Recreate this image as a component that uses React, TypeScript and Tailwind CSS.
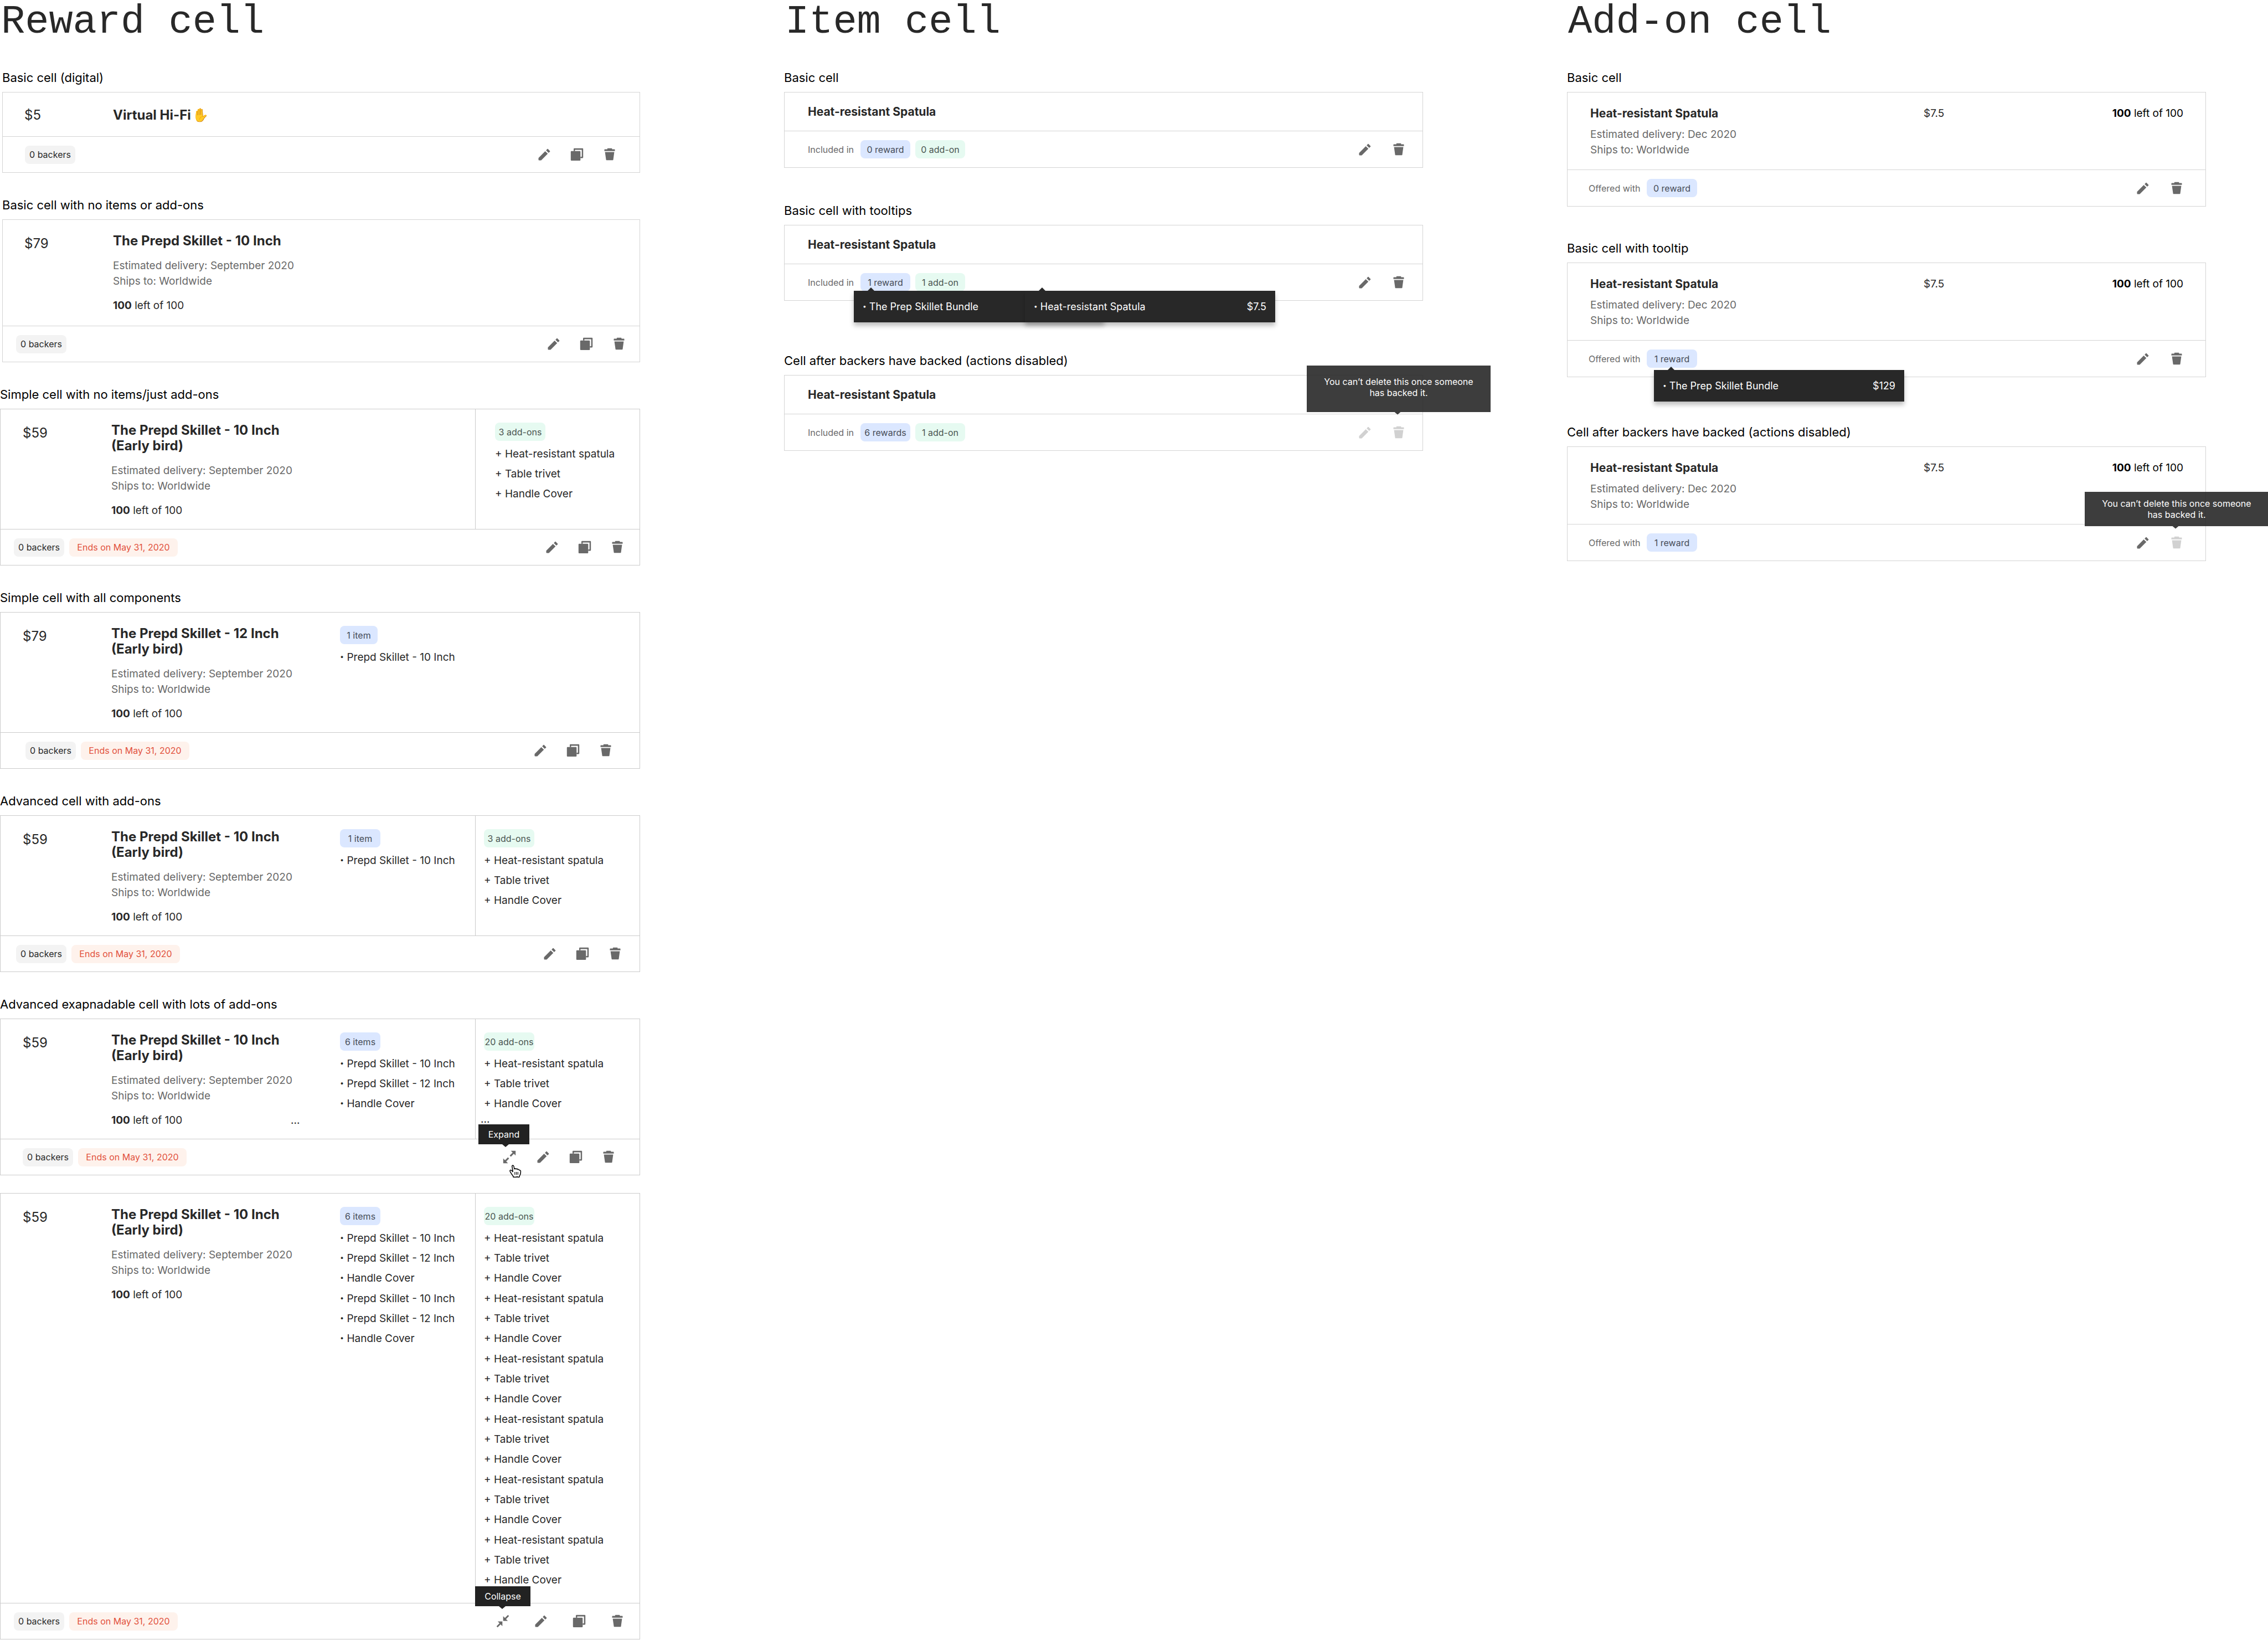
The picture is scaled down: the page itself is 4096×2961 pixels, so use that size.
import type { ReactNode } from "react";
import clsx from "clsx";

type IconProps = { className?: string };

function PencilIcon({ className }: IconProps) {
  return (
    <svg viewBox="0 0 24 24" fill="currentColor" className={clsx("size-6", className)} aria-hidden="true">
      <path d="M1.5 18.2 13.6 6.1 18.3 10.6 6.6 22.2a1 1 0 0 1-.6.2H2.3a.8.8 0 0 1-.8-.8z" />
      <path d="m15.2 4.4 2.2-2.3a.9.9 0 0 1 1.2 0l3.6 3.6a.8.8 0 0 1 0 1.1L19.8 9z" />
    </svg>
  );
}

function CopyIcon({ className }: IconProps) {
  return (
    <svg viewBox="0 0 24 24" fill="currentColor" className={clsx("size-6", className)} aria-hidden="true">
      <rect x="0.8" y="5.7" width="17.5" height="17.3" rx="1.2" />
      <path d="M6 5.7V1.9A1.1 1.1 0 0 1 7.1.8h15a1.1 1.1 0 0 1 1.1 1.1v15.4a1.1 1.1 0 0 1-1.1 1.1h-3.8v-2.5h2.4V3.4H8.4v2.3z" />
    </svg>
  );
}

function TrashIcon({ className }: IconProps) {
  return (
    <svg viewBox="0 0 24 24" fill="currentColor" className={clsx("size-6", className)} aria-hidden="true">
      <path d="M2.5 5.7V3.3a.7.7 0 0 1 .7-.7h4.6V1.6A.8.8 0 0 1 8.6.8h7a.8.8 0 0 1 .8.8v1h4.4a.7.7 0 0 1 .7.7v2.4z" />
      <path d="M3.6 7.4h16.8l-1.9 14a.9.9 0 0 1-.9.8H6.5a.9.9 0 0 1-.9-.8z" />
    </svg>
  );
}

function ExpandIcon() {
  return (
    <svg viewBox="0 0 24 24" fill="currentColor" className="size-6" aria-hidden="true">
      <path d="M14.6.8h8.6v8.5z" />
      <path d="M.8 14.6v8.6h8.6z" />
      <path d="M13.6 10.4 20 4M10.4 13.6 4 20" stroke="currentColor" strokeWidth="3" />
    </svg>
  );
}

function CollapseIcon() {
  return (
    <svg viewBox="0 0 24 24" fill="currentColor" className="size-6" aria-hidden="true">
      <path d="M12.7 3.1v8.4h8.4z" />
      <path d="M11.3 20.9v-8.4H2.9z" />
      <path d="M22.3 1.7 15.6 8.4M1.7 22.3l6.7-6.7" stroke="currentColor" strokeWidth="2.8" />
    </svg>
  );
}

function HandCursor() {
  return (
    <svg viewBox="0 0 32 35" className="absolute left-3 top-[26px] z-20 h-6 w-[22px]" aria-hidden="true">
      <path
        d="M10.5 32.5c-.4-2.4-1.4-4.2-3.2-6.2-2.3-2.6-3.4-4.8-5-7.6-1-1.8-1.5-3.5-.2-4.4 1.5-1 3.4.3 4.7 1.7l2 2.4C8.9 15 7.8 9.6 7 5.5 6.6 3.3 7.2 1.7 8.7 1.5c1.7-.2 2.6 1.2 3 3.2l1.3 6.5c.7-2 4-1.9 4.5.4.9-1.5 3.9-1.2 4.4 1 .9-.9 3.6-.6 4.1 1.7.9-.3 3.3-.1 3.6 2.1.4 3-.3 5.5-.8 8.1-.4 2.200-2.400 3.300-2.800 8h-4.300l-1.500-1.400-1.800 1.400z"
        fill="#fff"
        stroke="#000"
        strokeWidth="2.2"
        strokeLinejoin="round"
      />
      <path d="M14.3 18.8v7.4M18.3 18.8v7.4M22.3 18.8v7.4" stroke="#000" strokeWidth="1.7" />
    </svg>
  );
}

function IconButton({
  label,
  disabled,
  children,
  tooltip,
}: {
  label: string;
  disabled?: boolean;
  children: ReactNode;
  tooltip?: ReactNode;
}) {
  return (
    <div className="relative size-6">
      <button
        type="button"
        aria-label={label}
        disabled={disabled}
        className="block size-6 text-[#696969] disabled:text-[#d1d1d1]"
      >
        {children}
      </button>
      {tooltip}
    </div>
  );
}

const pillTones = {
  grey: "bg-[#f3f3f3] text-[#282828]",
  red: "bg-[#fef2ec] text-[#e2513c]",
  blue: "bg-[#dbe7ff] text-[#464c57]",
  green: "bg-[#e6faf1] text-[#4a5450]",
};

function Pill({
  tone,
  width,
  children,
}: {
  tone: keyof typeof pillTones;
  width: string;
  children: ReactNode;
}) {
  return (
    <span
      className={clsx(
        "flex h-[33px] items-center justify-center whitespace-nowrap rounded-lg text-base leading-none",
        pillTones[tone],
        width,
      )}
    >
      {children}
    </span>
  );
}

function Section({ title, className, children }: { title: string; className?: string; children: ReactNode }) {
  return (
    <section className={className}>
      <h2 className="mb-[13px] text-[22px] leading-[26px] text-black">{title}</h2>
      {children}
    </section>
  );
}

function Stock() {
  return (
    <p className="text-[19px] leading-7">
      <strong className="font-bold">100</strong> left of 100
    </p>
  );
}

function ActionTooltip({ label, className }: { label: string; className: string }) {
  return (
    <div
      role="tooltip"
      className={clsx(
        "absolute z-10 flex h-9 items-center justify-center bg-[#222] text-base text-white",
        className,
      )}
    >
      {label}
      <span className="absolute left-[43px] top-full h-[5px] w-3 bg-[#222] [clip-path:polygon(0_0,100%_0,50%_100%)]" />
    </div>
  );
}

type RewardProps = {
  price: string;
  name: string;
  earlyBird?: boolean;
  digital?: boolean;
  items?: string[][];
  itemLabel?: string;
  itemPillWidth?: string;
  addons?: string[][];
  addonLabel?: string;
  addonPad?: string;
  truncated?: boolean;
  ends?: boolean;
  footerPad: string;
  iconGap?: string;
  toggle?: "expand" | "collapse";
  className?: string;
};

function ItemList({ groups, mark }: { groups: string[][]; mark: ReactNode }) {
  return (
    <div className="mt-1.5 flex flex-col gap-px">
      {groups.map((group, g) => (
        <ul key={g} className="whitespace-nowrap text-[19px] leading-9">
          {group.map((entry) => (
            <li key={entry}>
              {mark} {entry}
            </li>
          ))}
        </ul>
      ))}
    </div>
  );
}

function Dot() {
  return <span className="font-black">·</span>;
}

function RewardCard(p: RewardProps) {
  const line = p.earlyBird ? "border-[#cbcbcb]" : "border-[#d4d4d4]";
  return (
    <article className={clsx("border", line, p.className)}>
      <div className="flex">
        <div
          className={clsx(
            "flex flex-1",
            p.earlyBird ? "pl-10" : "pl-[39px]",
            p.digital ? "pb-6 pt-[27px]" : "pt-6",
          )}
        >
          <p className={clsx("w-40 text-2xl", p.digital ? "leading-7" : "leading-[38px]")}>{p.price}</p>
          <div className="w-[413px]">
            <h3 className="text-2xl font-bold leading-7">
              {p.name}
              {p.digital && <span className="ml-0.5 text-2xl leading-7">✋</span>}
              {p.earlyBird && (
                <>
                  <br />
                  (Early bird)
                </>
              )}
            </h3>
            {!p.digital && (
              <>
                <p className="mt-[17px] text-[19px] leading-7 text-[#696969]">
                  Estimated delivery: September 2020
                  <br />
                  Ships to: Worldwide
                </p>
                <div className={clsx("mt-4 flex", p.earlyBird ? "mb-[19px]" : "mb-[22px]")}>
                  <div className="w-[324px]">
                    <Stock />
                  </div>
                  {p.truncated && <span className="text-[19px] leading-7">...</span>}
                </div>
              </>
            )}
          </div>
          {p.items && (
            <div className="flex-1">
              <Pill tone="blue" width={p.itemPillWidth ?? "w-[73px]"}>
                {p.itemLabel}
              </Pill>
              <ItemList groups={p.items} mark={<Dot />} />
            </div>
          )}
        </div>
        {p.addons && (
          <div className={clsx("w-[297px] border-l pt-6", line, p.addonPad ?? "pl-[15px]")}>
            <Pill tone="green" width="w-[91px]">
              {p.addonLabel}
            </Pill>
            <ItemList groups={p.addons} mark="+" />
            {p.truncated ? (
              <p className="-ml-1.5 text-[19px] leading-5">...</p>
            ) : (
              <div className="h-[23px]" />
            )}
          </div>
        )}
      </div>
      <footer className={clsx("flex h-[65px] items-center border-t", line, p.footerPad)}>
        <Pill tone="grey" width="w-[91px]">
          0 backers
        </Pill>
        {p.ends && (
          <div className="ml-[9px]">
            <Pill tone="red" width="w-[196px]">
              Ends on May 31, 2020
            </Pill>
          </div>
        )}
        <div className={clsx("ml-auto flex", p.iconGap ?? "gap-[35px]")}>
          {p.toggle === "expand" && (
            <div className="mr-0.5">
              <IconButton
                label="Expand"
                tooltip={
                  <>
                    <ActionTooltip label="Expand" className="-left-11 bottom-[35px] w-[92px]" />
                    <HandCursor />
                  </>
                }
              >
                <ExpandIcon />
              </IconButton>
            </div>
          )}
          {p.toggle === "collapse" && (
            <IconButton
              label="Collapse"
              tooltip={<ActionTooltip label="Collapse" className="-left-[38px] bottom-[39px] w-[100px]" />}
            >
              <CollapseIcon />
            </IconButton>
          )}
          <IconButton label="Edit">
            <PencilIcon />
          </IconButton>
          <IconButton label="Duplicate">
            <CopyIcon />
          </IconButton>
          <IconButton label="Delete">
            <TrashIcon />
          </IconButton>
        </div>
      </footer>
    </article>
  );
}

function ListTooltip({ name, price, className }: { name: string; price?: string; className: string }) {
  return (
    <div
      role="tooltip"
      className={clsx(
        "absolute z-10 flex h-[57px] w-[452px] items-center justify-between bg-[#282828] px-4 text-lg text-white shadow-[0_6px_8px_rgba(0,0,0,0.25)]",
        className,
      )}
    >
      <span>
        <Dot /> {name}
      </span>
      <span>{price}</span>
      <span className="absolute bottom-full left-[25px] h-1.5 w-3 bg-[#282828] [clip-path:polygon(50%_0,100%_100%,0_100%)]" />
    </div>
  );
}

function DeleteTooltip({ className }: { className: string }) {
  return (
    <div
      role="tooltip"
      className={clsx(
        "absolute left-1/2 z-10 w-[332px] -translate-x-1/2 bg-[#222222e0] text-center text-base leading-5 text-white",
        className,
      )}
    >
      You can’t delete this once someone
      <br />
      has backed it.
      <span className="absolute left-[158px] top-full h-[5px] w-3 bg-[#222222e0] [clip-path:polygon(0_0,100%_0,50%_100%)]" />
    </div>
  );
}

function ItemCard({
  rewards,
  addons,
  tooltips,
  disabled,
}: {
  rewards: string;
  addons: string;
  tooltips?: boolean;
  disabled?: boolean;
}) {
  return (
    <article className="border border-[#d4d4d4]">
      <h3 className="pb-5 pl-[42px] pt-[21px] text-[21px] font-bold leading-7">Heat-resistant Spatula</h3>
      <footer className="flex h-[66px] items-center border-t border-[#d4d4d4] pl-[42px] pr-[31px]">
        <span className="w-[95px] text-base text-[#696969]">Included in</span>
        <div className="relative">
          <Pill tone="blue" width="w-[90px]">
            {rewards}
          </Pill>
          {tooltips && <ListTooltip name="The Prep Skillet Bundle" className="-left-3 top-8" />}
        </div>
        <div className="relative ml-[9px]">
          <Pill tone="green" width="w-[90px]">
            {addons}
          </Pill>
          {tooltips && (
            <ListTooltip name="Heat-resistant Spatula" price="$7.5" className="left-[198px] top-8" />
          )}
        </div>
        <div className="ml-auto flex gap-[37px]">
          <IconButton label="Edit" disabled={disabled}>
            <PencilIcon />
          </IconButton>
          <IconButton
            label="Delete"
            disabled={disabled}
            tooltip={disabled && <DeleteTooltip className="bottom-[49px] pb-[25px] pt-[19px]" />}
          >
            <TrashIcon />
          </IconButton>
        </div>
      </footer>
    </article>
  );
}

function AddonCard({
  rewards,
  tooltip,
  disabled,
}: {
  rewards: string;
  tooltip?: boolean;
  disabled?: boolean;
}) {
  return (
    <article className="border border-[#d4d4d4]">
      <div className="flex pb-[21px] pl-[41px] pr-10 pt-6">
        <div className="w-[602px]">
          <h3 className="text-[21px] font-bold leading-7">Heat-resistant Spatula</h3>
          <p className="mt-2.5 text-[19px] leading-7 text-[#696969]">
            Estimated delivery: Dec 2020
            <br />
            Ships to: Worldwide
          </p>
        </div>
        <p className="text-[19px] leading-7">$7.5</p>
        <div className="ml-auto text-black">
          <Stock />
        </div>
      </div>
      <footer className="flex h-[66px] items-center border-t border-[#d4d4d4] pl-[38px] pr-10">
        <span className="w-[105px] text-base text-[#696969]">Offered with</span>
        <div className="relative">
          <Pill tone="blue" width="w-[91px]">
            {rewards}
          </Pill>
          {tooltip && (
            <ListTooltip name="The Prep Skillet Bundle" price="$129" className="left-[13px] top-[37px]" />
          )}
        </div>
        <div className="ml-auto flex gap-[37px]">
          <IconButton label="Edit">
            <PencilIcon />
          </IconButton>
          <IconButton
            label="Delete"
            disabled={disabled}
            tooltip={disabled && <DeleteTooltip className="bottom-[42px] py-[11px]" />}
          >
            <TrashIcon />
          </IconButton>
        </div>
      </footer>
    </article>
  );
}

function Column({ title, gap, children }: { title: string; gap: string; children: ReactNode }) {
  return (
    <div>
      <h1 className="mb-[47px] whitespace-nowrap pl-0.5 font-['Liberation_Mono',monospace] text-[72px] leading-[80px]">
        {title}
      </h1>
      <div className={clsx("flex flex-col", gap)}>{children}</div>
    </div>
  );
}

const addonGroup = ["Heat-resistant spatula", "Table trivet", "Handle Cover"];
const itemGroup = ["Prepd Skillet - 10 Inch", "Prepd Skillet - 12 Inch", "Handle Cover"];

export default function App() {
  return (
    <main className="grid w-full grid-cols-[1156fr_1154fr_1154fr] gap-x-[260px] overflow-x-hidden bg-white pr-28 font-['Inter',sans-serif] text-[#282828]">
      <Column title="Reward cell" gap="gap-[45px]">
        <Section title="Basic cell (digital)" className="ml-1">
          <RewardCard price="$5" name="Virtual Hi-Fi" digital footerPad="pl-10 pr-[42px]" />
        </Section>
        <Section title="Basic cell with no items or add-ons" className="ml-1">
          <RewardCard price="$79" name="The Prepd Skillet - 10 Inch" footerPad="pl-6 pr-[25px]" />
        </Section>
        <Section title="Simple cell with no items/just add-ons">
          <RewardCard
            price="$59"
            name="The Prepd Skillet - 10 Inch"
            earlyBird
            addons={[addonGroup]}
            addonLabel="3 add-ons"
            addonPad="pl-[35px]"
            ends
            footerPad="pl-6 pr-7"
          />
        </Section>
        <Section title="Simple cell with all components">
          <RewardCard
            price="$79"
            name="The Prepd Skillet - 12 Inch"
            earlyBird
            items={[["Prepd Skillet - 10 Inch"]]}
            itemLabel="1 item"
            itemPillWidth="w-[68px]"
            ends
            footerPad="pl-[45px] pr-[49px]"
          />
        </Section>
        <Section title="Advanced cell with add-ons">
          <RewardCard
            price="$59"
            name="The Prepd Skillet - 10 Inch"
            earlyBird
            items={[["Prepd Skillet - 10 Inch"]]}
            itemLabel="1 item"
            addons={[addonGroup]}
            addonLabel="3 add-ons"
            ends
            footerPad="pl-7 pr-8"
          />
        </Section>
        <Section title="Advanced exapnadable cell with lots of add-ons">
          <RewardCard
            price="$59"
            name="The Prepd Skillet - 10 Inch"
            earlyBird
            items={[itemGroup]}
            itemLabel="6 items"
            addons={[addonGroup]}
            addonLabel="20 add-ons"
            truncated
            ends
            footerPad="pl-10 pr-11"
            toggle="expand"
          />
          <RewardCard
            price="$59"
            name="The Prepd Skillet - 10 Inch"
            earlyBird
            items={[itemGroup, itemGroup]}
            itemLabel="6 items"
            addons={[addonGroup, addonGroup, addonGroup, addonGroup, addonGroup, addonGroup]}
            addonLabel="20 add-ons"
            ends
            footerPad="pl-6 pr-7"
            iconGap="gap-[45px]"
            toggle="collapse"
            className="mt-8"
          />
        </Section>
      </Column>

      <Column title="Item cell" gap="gap-[64px]">
        <Section title="Basic cell">
          <ItemCard rewards="0 reward" addons="0 add-on" />
        </Section>
        <Section title="Basic cell with tooltips" className="mb-[31px]">
          <ItemCard rewards="1 reward" addons="1 add-on" tooltips />
        </Section>
        <Section title="Cell after backers have backed (actions disabled)">
          <ItemCard rewards="6 rewards" addons="1 add-on" disabled />
        </Section>
      </Column>

      <Column title="Add-on cell" gap="gap-[62px]">
        <Section title="Basic cell">
          <AddonCard rewards="0 reward" />
        </Section>
        <Section title="Basic cell with tooltip" className="mb-6">
          <AddonCard rewards="1 reward" tooltip />
        </Section>
        <Section title="Cell after backers have backed (actions disabled)">
          <AddonCard rewards="1 reward" disabled />
        </Section>
      </Column>
    </main>
  );
}
